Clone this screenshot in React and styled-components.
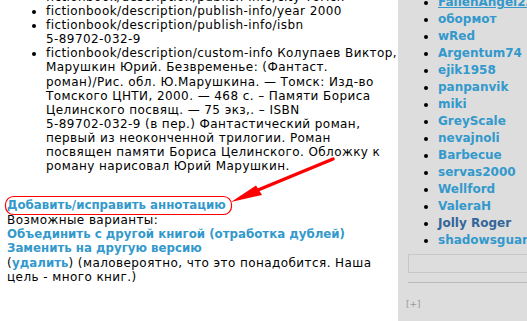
import React from "react";
import styled, { createGlobalStyle } from "styled-components";

const Global = createGlobalStyle`
  html, body { margin: 0; padding: 0; background: #fff; }
  body { font-family: "DejaVu Sans", Verdana, sans-serif; overflow: hidden; }
`;

const Page = styled.div`
  position: relative;
  display: flex;
  width: 527px;
  height: 321px;
  overflow: hidden;
`;

const Main = styled.div`
  width: 398px;
  flex: none;
  font-size: 12px;
  letter-spacing: 0.42px;
  line-height: 14.4px;
  color: #000;
`;

const InfoList = styled.ul`
  margin: -10px 0 25px 0;
  padding-left: 46px;
  list-style: disc;
  white-space: nowrap;
  line-height: 14.1px;
`;

const InfoItem = styled.li``;

const Actions = styled.div`
  padding-left: 7px;
  white-space: nowrap;
`;

const Line = styled.div``;

const Link = styled.a`
  color: ${(p) => (p.$dark ? "#336699" : "#3399cc")};
  font-weight: bold;
  letter-spacing: 0;
  font-size: ${(p) => (p.$side ? "12px" : "11.8px")};
  text-decoration: ${(p) => (p.$under ? "underline" : "none")};
`;

const Sidebar = styled.div`
  flex: 1;
  min-width: 0;
  background: #dddddd;
  overflow: hidden;
  white-space: nowrap;
`;

const UserList = styled.ul`
  margin: -6px 0 0 0;
  padding-left: 40px;
  list-style: disc;
  font-size: 12px;
  line-height: 17px;
  color: #000;
`;

const UserItem = styled.li``;

const SearchBox = styled.div`
  margin: 5px 0 0 10px;
  width: 140px;
  height: 17px;
  border: 1px solid #c8c8c8;
`;

const Rule = styled.div`
  margin: 9px 0 0 10px;
  height: 1px;
  background: #b9b9b9;
`;

const Expand = styled.div`
  margin: 16px 0 0 8px;
  font-size: 9px;
  color: #999;
`;

const Overlay = styled.svg`
  position: absolute;
  left: 0;
  top: 0;
  pointer-events: none;
`;

const users = [
  ["FallenAngel23", false, true],
  ["обормот"],
  ["wRed"],
  ["Argentum74"],
  ["ejik1958"],
  ["panpanvik"],
  ["miki"],
  ["GreyScale"],
  ["nevajnoli"],
  ["Barbecue"],
  ["servas2000"],
  ["Wellford"],
  ["ValeraH"],
  ["Jolly Roger", true],
  ["shadowsguard"],
];

export default function App() {
  return (
    <>
      <Global />
      <Page>
        <Main>
          <InfoList>
            <InfoItem>fictionbook/description/publish-info/city Томск</InfoItem>
            <InfoItem>fictionbook/description/publish-info/year 2000</InfoItem>
            <InfoItem>
              fictionbook/description/publish-info/isbn
              <br />
              5-89702-032-9
            </InfoItem>
            <InfoItem>
              fictionbook/description/custom-info Колупаев Виктор,
              <br />
              Марушкин Юрий. Безвременье: (Фантаст.
              <br />
              роман)/Рис. обл. Ю.Марушкина. — Томск: Изд-во
              <br />
              Томского ЦНТИ, 2000. — 468 с. – Памяти Бориса
              <br />
              Целинского посвящ. — 75 экз,. – ISBN
              <br />
              5-89702-032-9 (в пер.) Фантастический роман,
              <br />
              первый из неоконченной трилогии. Роман
              <br />
              посвящен памяти Бориса Целинского. Обложку к
              <br />
              роману нарисовал Юрий Марушкин.
            </InfoItem>
          </InfoList>
          <Actions>
            <Line>
              <Link href="#">Добавить/исправить аннотацию</Link>
            </Line>
            <Line>Возможные варианты:</Line>
            <Line>
              <Link href="#">Объединить с другой книгой (отработка дублей)</Link>
            </Line>
            <Line>
              <Link href="#">Заменить на другую версию</Link>
            </Line>
            <Line>
              (<Link href="#">удалить</Link>) (маловероятно, что это понадобится. Наша
            </Line>
            <Line>цель - много книг.)</Line>
          </Actions>
        </Main>
        <Sidebar>
          <UserList>
            {users.map(([name, dark, under]) => (
              <UserItem key={name}>
                <Link href="#" $side $dark={dark} $under={under}>
                  {name}
                </Link>
              </UserItem>
            ))}
          </UserList>
          <SearchBox />
          <Rule />
          <Expand>[+]</Expand>
        </Sidebar>
        <Overlay width="527" height="321" viewBox="0 0 527 321">
          <rect x="5.5" y="196.5" width="226" height="18" rx="8" ry="8" fill="none" stroke="#ff0000" strokeWidth="1.2" />
          <line x1="258" y1="190" x2="333" y2="159" stroke="#ff0000" strokeWidth="3.5" strokeLinecap="round" />
          <polygon points="231,202 256,185.5 262,195" fill="#ff0000" />
        </Overlay>
      </Page>
    </>
  );
}
